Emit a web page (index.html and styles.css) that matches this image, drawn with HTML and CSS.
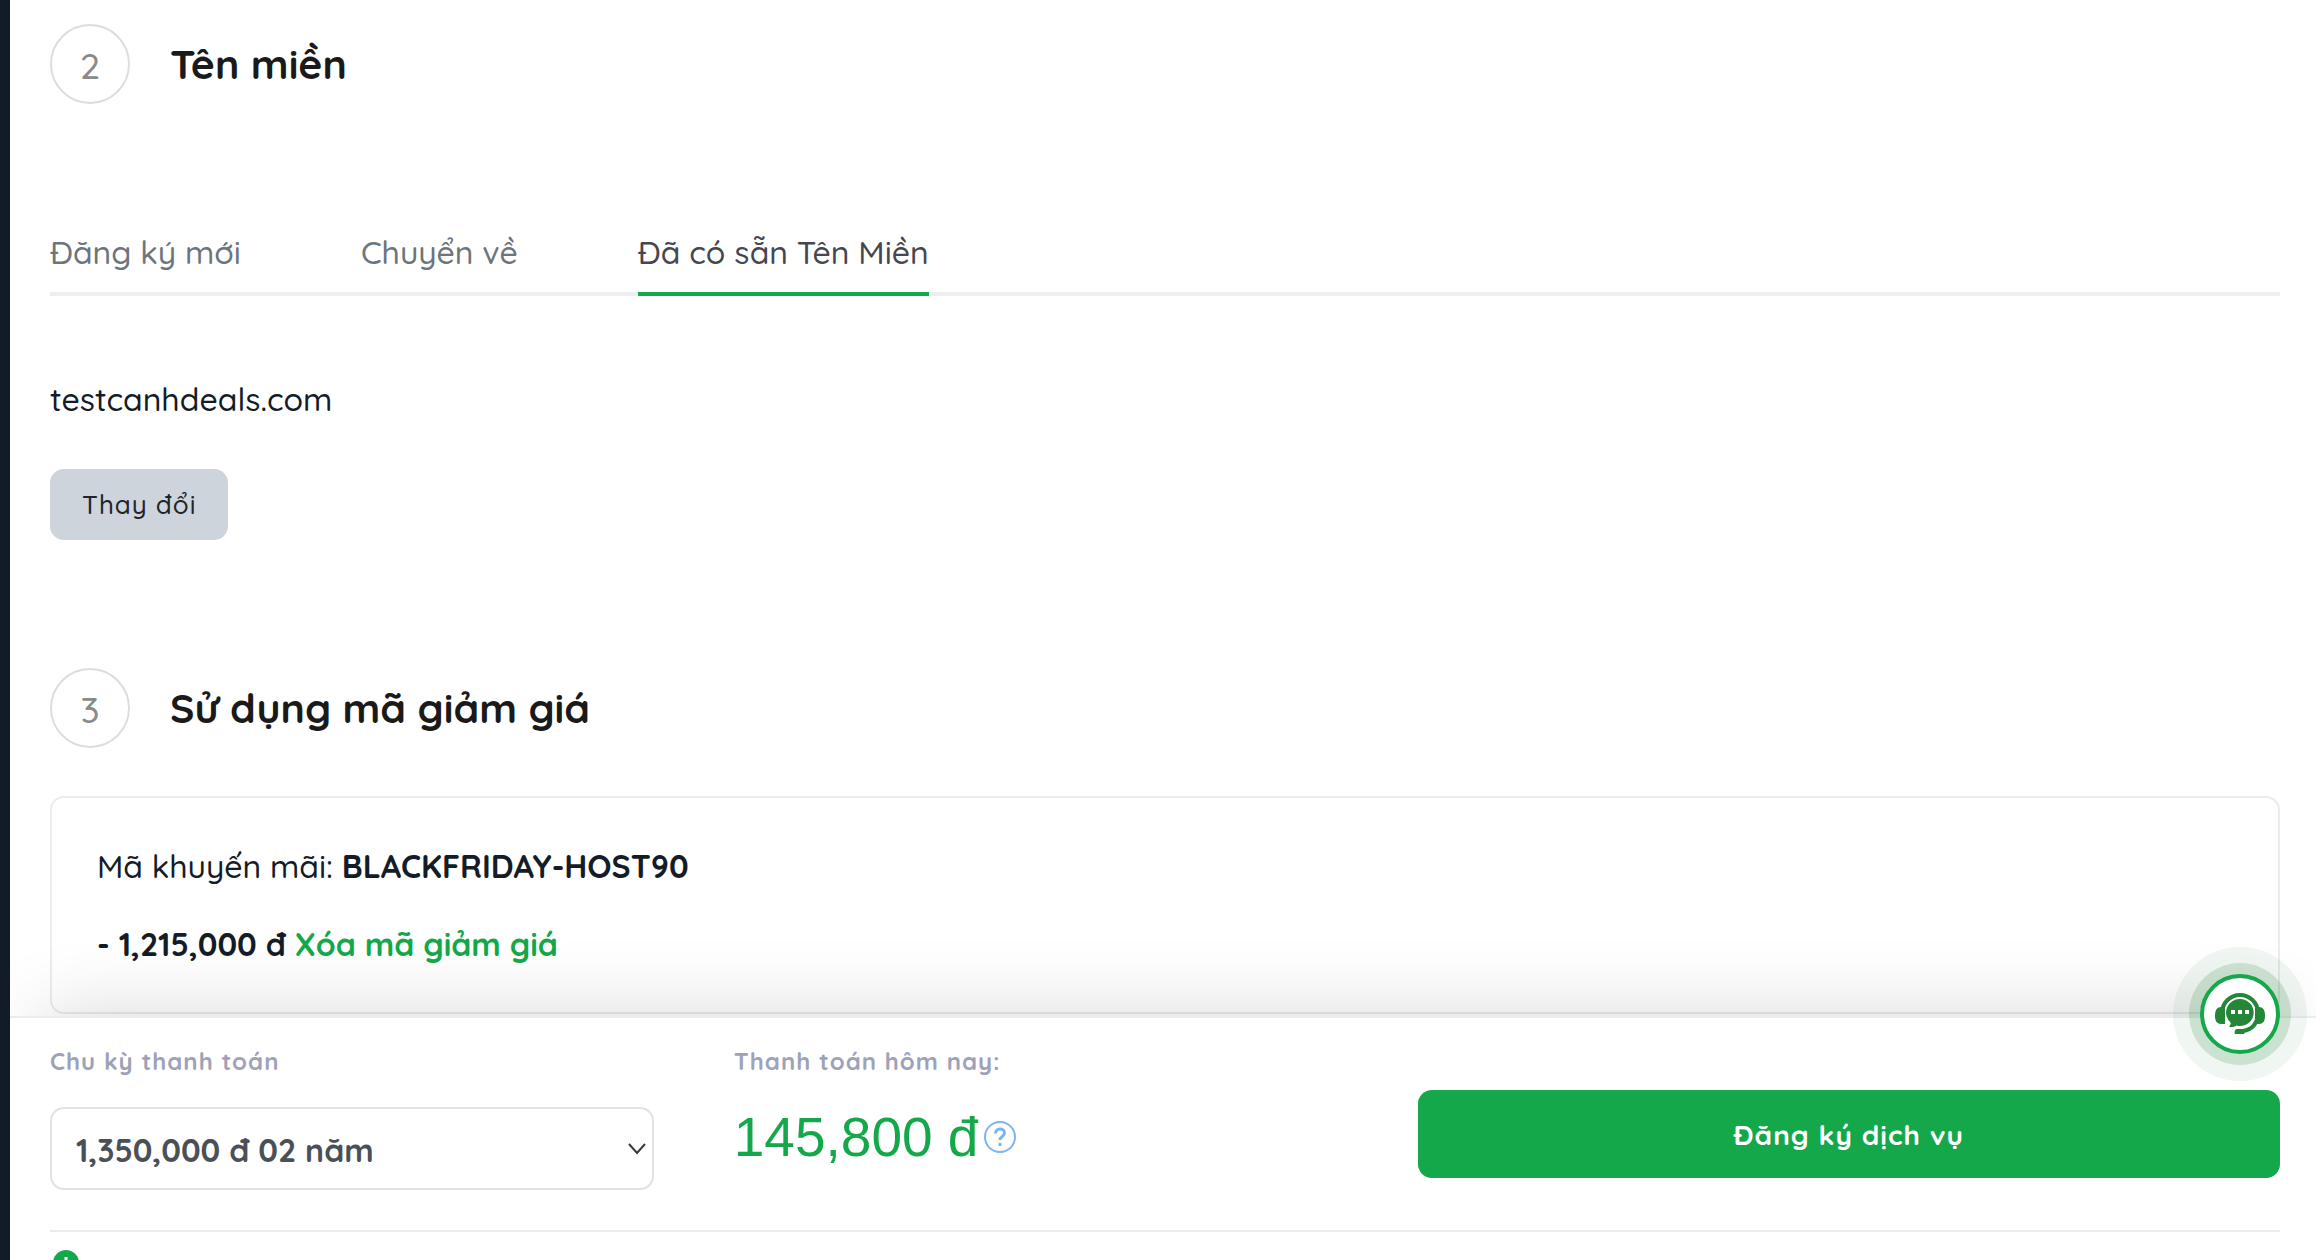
FILE: index.html
```html
<!DOCTYPE html>
<html lang="vi">
<head>
    <meta charset="UTF-8">
    <meta name="viewport" content="width=device-width, initial-scale=1.0">
    <title>Đăng ký dịch vụ</title>
    <link rel="stylesheet" href="styles.css">
</head>
<body>
    <div class="page">
        <main class="content">
            <section class="step">
                <div class="step-header">
                    <span class="step-number">2</span>
                    <h2>Tên miền</h2>
                </div>
                <nav class="tabs">
                    <a href="#register">Đăng ký mới</a>
                    <a href="#transfer">Chuyển về</a>
                    <a href="#own" class="active">Đã có sẵn Tên Miền</a>
                </nav>
                <p class="domain">testcanhdeals.com</p>
                <button type="button" class="btn-change">Thay đổi</button>
            </section>

            <section class="step">
                <div class="step-header">
                    <span class="step-number">3</span>
                    <h2>Sử dụng mã giảm giá</h2>
                </div>
                <div class="promo">
                    <p>Mã khuyến mãi: <b>BLACKFRIDAY-HOST90</b></p>
                    <p><b>- 1,215,000 đ <a href="#remove">Xóa mã giảm giá</a></b></p>
                </div>
            </section>
        </main>

        <footer class="summary">
            <div class="summary-row">
                <div class="cycle">
                    <label for="cycle">Chu kỳ thanh toán</label>
                    <div class="select-wrap">
                        <select id="cycle">
                            <option>1,350,000 đ 02 năm</option>
                        </select>
                        <svg class="chevron" viewBox="0 0 18 12"><path d="M1 1l8 9 8-9"/></svg>
                    </div>
                </div>
                <div class="total">
                    <span class="label">Thanh toán hôm nay:</span>
                    <div class="price">
                        <span>145,800 đ</span>
                        <svg class="help" viewBox="0 0 32 32">
                            <circle cx="16" cy="16" r="15"/>
                            <path class="mark" d="M11.500 12.500c0-6 9-6 9-.5 0 3.500-4.500 3.500-4.500 7"/>
                            <path class="mark" d="M16 22v3"/>
                        </svg>
                    </div>
                </div>
                <button type="submit" class="btn-submit">Đăng ký dịch vụ</button>
            </div>
            <div class="summary-more">
                <svg class="info" viewBox="0 0 26 26">
                    <circle cx="13" cy="13" r="13"/>
                    <path d="M13 7v6M13 17v2"/>
                </svg>
            </div>

            <button type="button" class="chat" aria-label="Chat">
                <svg viewBox="0 0 50 42">
                    <path d="M10 14v17H6c-4 0-6-3-6-8 0-6 2-9 6-9zM40 14v17h4c4 0 6-3 6-8 0-6-2-9-6-9z"/>
                    <path class="band" d="M7 20a18 18 0 0 1 36 0c0 10-6 17-15 18"/>
                    <path d="M22 36h9l-2 5h-9c-1-2 0-5 2-5z"/>
                    <path d="M25 6a13.500 13.500 0 1 1-3.500 26.500c-2 1.500-5 2-7.500 1 1.500-1 2-2.500 1.500-4A13.500 13.500 0 0 1 25 6z"/>
                    <path class="dots" d="M16 17h4v4h-4zM23 17h4v4h-4zM30 17h4v4h-4z"/>
                </svg>
            </button>
        </footer>
    </div>
</body>
</html>
```

FILE: styles.css
```css
* {
    box-sizing: border-box;
}
body {
    margin: 0;
    font-family: Quicksand, "Open Sans", "Noto Sans", sans-serif;
    font-size: 32px;
    font-weight: 500;
    line-height: 48px;
    color: #131c27;
    background-color: #fff;
}
button, select {
    font-family: inherit;
    cursor: pointer;
}
a {
    text-decoration: none;
}
p {
    margin: 0;
}
b {
    font-weight: 700;
}
.page {
    display: flex;
    flex-direction: column;
    height: 100vh;
    border-left: 10px solid #131b26;
    overflow: hidden;
}
.content {
    flex: 1;
    min-height: 0;
    padding: 24px 36px 0 40px;
}
.step {
    margin-bottom: 128px;
}
.step-header {
    display: flex;
    align-items: center;
    gap: 40px;
}
.step-number {
    width: 80px;
    height: 80px;
    border: 2px solid #ddd;
    border-radius: 50%;
    text-align: center;
    line-height: 80px;
    font-size: 36px;
    color: #8a8a8a;
}
h2 {
    margin: 0;
    font-size: 41px;
    font-weight: 700;
    color: #1a1a1a;
}

.tabs {
    display: flex;
    gap: 120px;
    margin-top: 124px;
    border-bottom: 4px solid #eee;
}
.tabs a {
    padding-bottom: 16px;
    margin-bottom: -4px;
    border-bottom: 4px solid transparent;
    color: #6c757d;
}
.tabs a.active {
    color: #464652;
    border-color: #14a84b;
}
.domain {
    margin: 79px 0 46px;
}
.btn-change {
    display: block;
    height: 71px;
    padding: 0 32px;
    border: none;
    border-radius: 14px;
    background-color: #ced4dc;
    color: #212529;
    font-size: 26px;
    font-weight: 500;
    letter-spacing: 1px;
}

.promo {
    margin-top: 48px;
    padding: 44px 45px;
    border: 2px solid #ebebf0;
    border-radius: 14px;
}
.promo p + p {
    margin-top: 30px;
}
.promo a {
    color: #14a84b;
}

.summary {
    position: relative;
    padding: 23px 36px 0 40px;
    border-top: 2px solid #ebebf0;
    background-color: #fff;
    box-shadow: 0 -30px 80px -30px rgba(0, 0, 0, 0.16);
}
.summary-row {
    display: grid;
    grid-template-columns: 7fr 7fr 10fr;
    gap: 80px;
    padding-bottom: 40px;
    border-bottom: 2px solid #ebebf0;
}
.summary label, .label {
    display: block;
    line-height: 40px;
    font-size: 24px;
    font-weight: 700;
    letter-spacing: 1px;
    color: #9ea2b8;
}
.select-wrap {
    position: relative;
    margin-top: 26px;
}
select {
    display: block;
    width: 100%;
    height: 83px;
    padding: 2px 24px 0;
    border: 2px solid #dee2e6;
    border-radius: 14px;
    appearance: none;
    background-color: #fff;
    color: #495057;
    font-size: 32px;
    font-weight: 700;
}
.chevron {
    position: absolute;
    right: 8px;
    top: 36px;
    width: 18px;
    height: 12px;
    fill: none;
    stroke: #343a40;
    stroke-width: 2;
    pointer-events: none;
}
.price {
    display: flex;
    align-items: center;
    gap: 6px;
    margin-top: 24px;
    font-family: "Liberation Sans", Arial, sans-serif;
    font-size: 55px;
    font-weight: 400;
    line-height: 64px;
    color: #14a84b;
}
.help {
    width: 32px;
    height: 32px;
    fill: none;
    stroke: #7ab4f5;
    stroke-width: 2;
}
.mark {
    stroke-width: 3;
}
.btn-submit {
    height: 88px;
    margin-top: 49px;
    border: none;
    border-radius: 14px;
    background-color: #14a84b;
    color: #fff;
    font-size: 28px;
    font-weight: 700;
    letter-spacing: 1px;
}
.summary-more {
    height: 28px;
    padding: 18px 3px 0;
    overflow: hidden;
}
.info {
    display: block;
    width: 26px;
    height: 26px;
    fill: #14a84b;
}
.info path {
    stroke: #fff;
    stroke-width: 3;
}

.chat {
    position: absolute;
    right: 36px;
    top: -44px;
    width: 80px;
    height: 80px;
    padding: 0;
    border: 4px solid #14a84b;
    border-radius: 50%;
    background-color: #fff;
    box-shadow: 0 0 0 11px rgba(36, 135, 52, 0.18), 0 0 0 27px rgba(36, 135, 72, 0.07);
}
.chat svg {
    display: block;
    width: 50px;
    height: 42px;
    margin: 0 auto;
    fill: #248738;
}
.chat .band {
    fill: none;
    stroke: #248738;
    stroke-width: 4;
}
.chat .dots {
    fill: #fff;
}
```
